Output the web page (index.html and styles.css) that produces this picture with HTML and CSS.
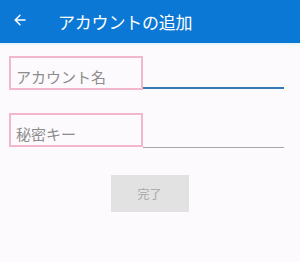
FILE: index.html
```html
<!DOCTYPE html>
<html lang="ja">
<head>
    <meta charset="UTF-8">
    <meta name="viewport" content="width=device-width, initial-scale=1.0">
    <title>アカウントの追加</title>
    <link rel="stylesheet" href="styles.css">
</head>
<body>
    <header class="app-bar">
        <span class="back-btn">
            <svg width="12" height="12" viewBox="0 0 12 12">
                <path d="M11 6H1.5M6 1.2L1.2 6L6 10.8" fill="none" stroke="#fff" stroke-width="1.5" stroke-linecap="round" stroke-linejoin="round"/>
            </svg>
        </span>
        <h1>アカウントの追加</h1>
    </header>

    <form class="add-form">
        <div class="field">
            <div class="field-label">アカウント名</div>
            <div class="field-line active"></div>
        </div>

        <div class="field second">
            <div class="field-label">秘密キー</div>
            <div class="field-line"></div>
        </div>

        <div class="actions">
            <button type="button" class="done-btn">完了</button>
        </div>
    </form>
</body>
</html>
```

FILE: styles.css
```css
* {
    margin: 0;
    padding: 0;
    box-sizing: border-box;
    font-family: 'Noto Sans CJK JP', 'Noto Sans', sans-serif;
}

body {
    background: #fcfafc;
    width: 300px;
    height: 262px;
    overflow: hidden;
}

.app-bar {
    height: 45px;
    background: #0b78d6;
    border-bottom: 2px solid #e6f6f9;
    display: flex;
    align-items: center;
    padding-left: 14px;
    color: #fff;
}

.back-btn {
    display: flex;
    width: 12px;
    height: 12px;
    margin-top: -3px;
}

.app-bar h1 {
    font-size: 17px;
    font-weight: 400;
    margin-left: 32px;
    line-height: 1;
    margin-top: -1px;
    letter-spacing: -0.2px;
}

.add-form {
    padding: 11px 16px 0 9px;
}

.field {
    display: flex;
    align-items: flex-end;
}

.field.second {
    margin-top: 23px;
}

.field-label {
    width: 134px;
    height: 34px;
    border: 2px solid #f2b7cb;
    color: #8c8c8c;
    font-size: 15px;
    line-height: 1;
    padding: 11px 0 0 5px;
}

.field-line {
    flex: 1;
    border-bottom: 1px solid #a8a8a8;
    margin-bottom: -1px;
}

.field-line.active {
    border-bottom: 2px solid #3478b6;
    margin-bottom: 1px;
}

.actions {
    display: flex;
    justify-content: center;
    margin-top: 28px;
    padding-left: 6px;
}

.done-btn {
    width: 78px;
    height: 37px;
    border: none;
    background: #e2e2e2;
    color: #a6a6a6;
    font-size: 12px;
}
```
